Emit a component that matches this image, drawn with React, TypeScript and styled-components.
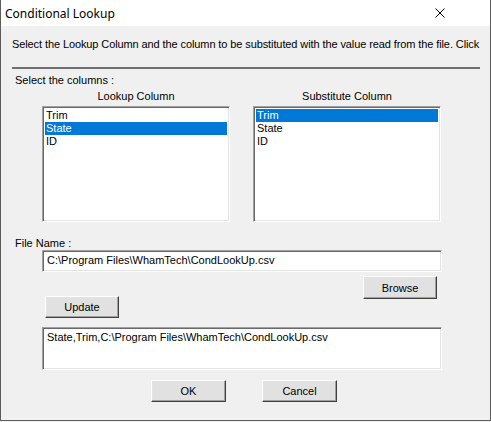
import React from "react";
import styled, { createGlobalStyle, css } from "styled-components";

const Global = createGlobalStyle`
  html, body { margin: 0; padding: 0; background: #f0f0f0; }
  body { width: 491px; height: 422px; overflow: hidden; font-family: "Liberation Sans", Arial, sans-serif; font-size: 11px; color: #000; }
`;

const Window = styled.div`
  box-sizing: border-box;
  width: 491px;
  height: 421px;
  background: #f0f0f0;
  border: 1px solid #5c5c5c;
  border-top: none;
  display: flex;
  flex-direction: column;
`;

const TitleBar = styled.div`
  height: 26px;
  background: #fff;
  display: flex;
  align-items: center;
  justify-content: space-between;
  padding: 0 45px 0 4px;
  font-family: "Noto Sans", "Open Sans", sans-serif;
  font-size: 12px;
`;

const Body = styled.div`
  display: flex;
  flex-direction: column;
  padding: 0 0 0 11px;
`;

const Label = styled.div<{ $top: number; $left?: number; $tight?: boolean }>`
  height: 13px;
  line-height: 13px;
  white-space: nowrap;
  margin-top: ${(p) => p.$top}px;
  margin-left: ${(p) => p.$left ?? 0}px;
  letter-spacing: ${(p) => (p.$tight ? "-0.1px" : "normal")};
`;

const Separator = styled.div`
  width: 468px;
  height: 2px;
  background: #707070;
  margin-top: 16px;
`;

const Columns = styled.div`
  display: flex;
  margin-top: 0;
  margin-left: 30px;
  gap: 23px;
`;

const Column = styled.div`
  display: flex;
  flex-direction: column;
  align-items: center;
  width: 188px;
`;

const sunken = css`
  box-sizing: border-box;
  background: #fff;
  border: 1px solid;
  border-color: #a0a0a0 #fff #fff #a0a0a0;
  box-shadow: inset 1px 1px 0 #696969, inset -1px -1px 0 #e3e3e3;
`;

const ListBox = styled.div`
  ${sunken};
  width: 188px;
  height: 116px;
  margin-top: 3px;
  padding: 2px 2px;
  display: flex;
  flex-direction: column;
`;

const ListItem = styled.div<{ $selected?: boolean }>`
  height: 13px;
  line-height: 13px;
  padding-left: 1px;
  background: ${(p) => (p.$selected ? "#0078d7" : "transparent")};
  color: ${(p) => (p.$selected ? "#fff" : "#000")};
`;

const Field = styled.div<{ $height: number; $top: number }>`
  ${sunken};
  width: 400px;
  height: ${(p) => p.$height}px;
  margin-top: ${(p) => p.$top}px;
  margin-left: 30px;
  padding: 3px 4px;
  line-height: 13px;
  white-space: nowrap;
`;

const ButtonRow = styled.div<{ $top: number; $justify: string; $pad?: string }>`
  display: flex;
  justify-content: ${(p) => p.$justify};
  gap: 36px;
  margin-top: ${(p) => p.$top}px;
  padding: ${(p) => p.$pad ?? "0"};
`;

const Button = styled.button<{ $w?: number; $h?: number }>`
  box-sizing: border-box;
  width: ${(p) => p.$w ?? 74}px;
  height: ${(p) => p.$h ?? 23}px;
  background: #e1e1e1;
  border: 1px solid;
  border-color: #fff #404040 #404040 #fff;
  box-shadow: inset -1px -1px 0 #a0a0a0, inset 1px 1px 0 #e3e3e3;
  font-family: "Liberation Sans", Arial, sans-serif;
  font-size: 11px;
  color: #000;
  padding: 0;
`;

const CloseIcon = () => (
  <svg width="10" height="10" viewBox="0 0 10 10">
    <path d="M0.5 0.5 L9.5 9.5 M9.5 0.5 L0.5 9.5" stroke="#000" strokeWidth="1" />
  </svg>
);

export default function App() {
  return (
    <>
      <Global />
      <Window>
        <TitleBar>
          <span>Conditional Lookup</span>
          <CloseIcon />
        </TitleBar>
        <Body>
          <Label $top={12} $tight>
            Select the Lookup Column and the column to be substituted with the value read from the file. Click
          </Label>
          <Separator />
          <Label $top={5} $left={3}>Select the columns :</Label>
          <Columns>
            <Column>
              <Label $top={3}>Lookup Column</Label>
              <ListBox>
                <ListItem>Trim</ListItem>
                <ListItem $selected>State</ListItem>
                <ListItem>ID</ListItem>
              </ListBox>
            </Column>
            <Column>
              <Label $top={3}>Substitute Column</Label>
              <ListBox>
                <ListItem $selected>Trim</ListItem>
                <ListItem>State</ListItem>
                <ListItem>ID</ListItem>
              </ListBox>
            </Column>
          </Columns>
          <Label $top={15} $left={3}>File Name :</Label>
          <Field $height={22} $top={0}>C:\Program Files\WhamTech\CondLookUp.csv</Field>
          <ButtonRow $top={4} $justify="flex-end" $pad="0 53px 0 0">
            <Button>Browse</Button>
          </ButtonRow>
          <ButtonRow $top={-3} $justify="flex-start" $pad="0 0 0 33px">
            <Button $h={22}>Update</Button>
          </ButtonRow>
          <Field $height={43} $top={9}>State,Trim,C:\Program Files\WhamTech\CondLookUp.csv</Field>
          <ButtonRow $top={10} $justify="flex-start" $pad="0 0 0 139px">
            <Button $w={75} $h={22}>OK</Button>
            <Button $w={75} $h={22}>Cancel</Button>
          </ButtonRow>
        </Body>
      </Window>
    </>
  );
}
